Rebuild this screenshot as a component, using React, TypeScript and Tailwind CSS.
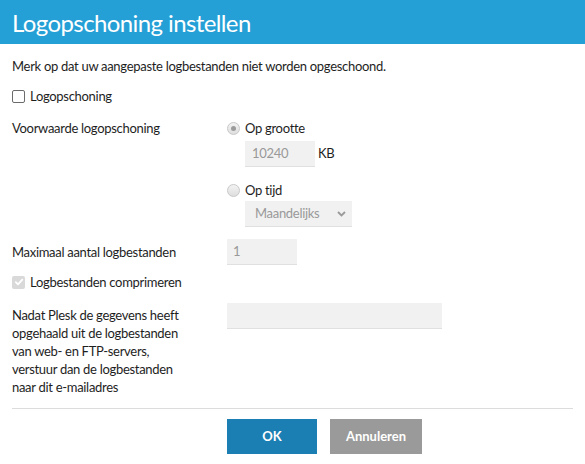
import React from "react";

const font = { fontFamily: 'Lato, "Open Sans", sans-serif' };

function Checkbox({ checked, disabled }: { checked?: boolean; disabled?: boolean }) {
  if (checked && disabled) {
    return (
      <span className="w-[13px] h-[13px] rounded-[2px] bg-[#d9d9d9] flex items-center justify-center shrink-0">
        <svg width="10" height="10" viewBox="0 0 10 10">
          <path d="M1.8 5.2 L4 7.4 L8.3 2.6" fill="none" stroke="#ffffff" strokeWidth="1.8" strokeLinecap="round" strokeLinejoin="round" />
        </svg>
      </span>
    );
  }
  return <span className="w-[13px] h-[13px] rounded-[2px] border border-[#6b6b6b] bg-white shrink-0" />;
}

function Radio({ checked }: { checked?: boolean }) {
  return (
    <span className="w-[13px] h-[13px] rounded-full border border-[#c8c8c8] bg-gradient-to-b from-[#f3f3f3] to-[#dedede] flex items-center justify-center shrink-0">
      {checked && <span className="w-[5px] h-[5px] rounded-full bg-[#9b9b9b]" />}
    </span>
  );
}

export default function App() {
  return (
    <div className="w-[585px] h-[464px] bg-white text-[13px] tracking-[-0.3px] text-[#1e1e1e] overflow-hidden" style={font}>
      <div className="h-[44px] bg-[#25a0d6] pl-3 flex items-center">
        <h1 className="text-[24px] tracking-[-0.6px] leading-[41px] text-white font-normal">Logopschoning instellen</h1>
      </div>
      <div className="px-3 pt-[13px]">
        <p className="leading-[18px]">Merk op dat uw aangepaste logbestanden niet worden opgeschoond.</p>
        <div className="mt-3 h-[18px] flex items-center gap-[5px]">
          <Checkbox />
          <span className="leading-[18px]">Logopschoning</span>
        </div>

        <div className="mt-[14px] flex">
          <div className="w-[215px] leading-[18px]">Voorwaarde logopschoning</div>
          <div className="flex flex-col">
            <div className="h-[18px] flex items-center gap-[5px]">
              <Radio checked />
              <span className="leading-[18px]">Op grootte</span>
            </div>
            <div className="mt-1 ml-[18px] flex items-center">
              <div className="w-[70px] h-[26px] bg-[#f1f1f1] border-b border-[#e0e0e0] pl-[7px] flex items-center text-[#999]">10240</div>
              <span className="ml-[3px]">KB</span>
            </div>
            <div className="mt-[14px] h-[18px] flex items-center gap-[5px]">
              <Radio />
              <span className="leading-[18px]">Op tijd</span>
            </div>
            <div className="mt-[2px] ml-[18px] w-[107px] h-[26px] bg-[#f1f1f1] border-b border-[#e0e0e0] pl-[10px] pr-[6px] flex items-center justify-between text-[#999]">
              <span>Maandelijks</span>
              <svg width="9" height="6" viewBox="0 0 9 6">
                <path d="M1 1 L4.5 4.5 L8 1" fill="none" stroke="#9a9a9a" strokeWidth="1.8" />
              </svg>
            </div>
          </div>
        </div>

        <div className="mt-3 flex items-center">
          <div className="w-[215px] leading-[18px]">Maximaal aantal logbestanden</div>
          <div className="w-[70px] h-[26px] bg-[#f1f1f1] border-b border-[#e0e0e0] pl-[6px] flex items-center text-[#999]">1</div>
        </div>

        <div className="mt-2 h-[18px] flex items-center gap-[5px]">
          <Checkbox checked disabled />
          <span className="leading-[18px]">Logbestanden comprimeren</span>
        </div>

        <div className="mt-3 flex items-start">
          <div className="w-[215px] pt-[3px] leading-[18px]">
            Nadat Plesk de gegevens heeft<br />
            opgehaald uit de logbestanden<br />
            van web- en FTP-servers,<br />
            verstuur dan de logbestanden<br />
            naar dit e-mailadres
          </div>
          <div className="w-[215px] h-[26px] bg-[#f1f1f1] border-b border-[#e0e0e0]" />
        </div>

        <div className="mt-3 border-t border-[#dcdcdc]" />

        <div className="mt-[10px] flex gap-[13px] pl-[215px]">
          <button className="w-[90px] h-[35px] bg-[#1c7fb3] text-white font-bold text-[13px] tracking-normal">OK</button>
          <button className="w-[92px] h-[35px] bg-[#9a9a9a] text-white font-bold text-[13px] tracking-normal">Annuleren</button>
        </div>
      </div>
    </div>
  );
}
